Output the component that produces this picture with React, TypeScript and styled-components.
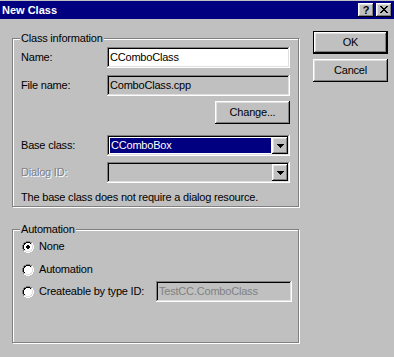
import React from 'react';
import styled, { createGlobalStyle } from 'styled-components';

const Global = createGlobalStyle`
  html, body { margin: 0; padding: 0; background: #c0c0c0; }
  body { font-family: "Liberation Sans", Arial, sans-serif; font-size: 11px; }
  * { box-sizing: border-box; }
`;

const raised = `box-shadow: inset -1px -1px #000, inset 1px 1px #fff, inset -2px -2px #808080, inset 2px 2px #dfdfdf;`;
const sunken = `box-shadow: inset -1px -1px #fff, inset 1px 1px #808080, inset -2px -2px #dfdfdf, inset 2px 2px #000;`;

const Window = styled.div`
  width: 394px;
  height: 357px;
  background: #c0c0c0;
  display: flex;
  flex-direction: column;
  overflow: hidden;
  color: #000;
  font-family: "Liberation Sans", Arial, sans-serif;
  font-size: 11px;
  line-height: 13px;
  letter-spacing: -0.2px;
`;

const TitleBar = styled.div`
  margin-top: 1px;
  height: 18px;
  background: #000080;
  display: flex;
  align-items: center;
  justify-content: space-between;
  padding: 0 2px 0 2px;
`;

const Title = styled.span`
  color: #fff;
  font-weight: bold;
  letter-spacing: 0;
`;

const CaptionButtons = styled.div`
  display: flex;
  gap: 2px;
`;

const CaptionButton = styled.div`
  width: 16px;
  height: 14px;
  background: #c0c0c0;
  ${raised}
  display: flex;
  align-items: center;
  justify-content: center;
  font-weight: bold;
  font-size: 11px;
  letter-spacing: 0;
  line-height: 14px;
  padding-bottom: 1px;
`;

const Body = styled.div`
  display: flex;
  align-items: flex-start;
  gap: 14px;
  padding: 12px 0 0 12px;
`;

const LeftColumn = styled.div`
  width: 287px;
  margin-top: 7px;
  display: flex;
  flex-direction: column;
  gap: 22px;
`;

const GroupBox = styled.div<{ $height: number; $pad: string }>`
  position: relative;
  height: ${(p) => p.$height}px;
  border: 1px solid #808080;
  box-shadow: inset 1px 1px #fff, 1px 1px #fff;
  padding: ${(p) => p.$pad};
  display: flex;
  flex-direction: column;
`;

const GroupLabel = styled.span`
  position: absolute;
  top: -7px;
  left: 7px;
  padding: 0 1px;
  background: #c0c0c0;
  line-height: 13px;
`;

const FieldRow = styled.div<{ $mt?: number }>`
  display: grid;
  grid-template-columns: 86px 183px;
  align-items: center;
  height: 21px;
  margin-top: ${(p) => p.$mt ?? 0}px;
`;

const Label = styled.span<{ $disabled?: boolean }>`
  color: ${(p) => (p.$disabled ? '#808080' : '#000')};
  text-shadow: ${(p) => (p.$disabled ? '1px 1px #fff' : 'none')};
`;

const TextField = styled.input<{ $disabled?: boolean }>`
  display: block;
  width: ${(p) => (p.width ? `${p.width}px` : '100%')};
  height: 21px;
  margin: 0;
  border: none;
  outline: none;
  padding: 0 3px 1px 3px;
  font: inherit;
  letter-spacing: -0.2px;
  color: ${(p) => (p.$disabled ? '#808080' : '#000')};
  background: ${(p) => (p.readOnly ? '#c0c0c0' : '#fff')};
  ${sunken}
`;

const ButtonRow = styled.div<{ $mt?: number }>`
  display: flex;
  justify-content: flex-end;
  padding-right: 0;
  width: 269px;
  margin-top: ${(p) => p.$mt ?? 0}px;
`;

const PushButton = styled.button<{ $default?: boolean }>`
  width: 75px;
  height: 23px;
  margin: 0;
  padding: 0 0 1px 0;
  border: none;
  background: #c0c0c0;
  font: inherit;
  letter-spacing: -0.2px;
  color: #000;
  ${(p) =>
    p.$default
      ? `box-shadow: inset 0 0 0 1px #000, inset -2px -2px #000, inset 2px 2px #fff, inset -3px -3px #808080, inset 3px 3px #dfdfdf;`
      : raised}
`;

const ComboBox = styled.div<{ $disabled?: boolean }>`
  display: flex;
  align-items: stretch;
  height: 21px;
  padding: 2px;
  background: ${(p) => (p.$disabled ? '#c0c0c0' : '#fff')};
  ${sunken}
`;

const ComboValue = styled.div<{ $selected?: boolean }>`
  flex: 1;
  margin: 1px;
  padding: 0 0 0 1px;
  display: flex;
  align-items: center;
  background: ${(p) => (p.$selected ? '#000080' : 'transparent')};
  color: ${(p) => (p.$selected ? '#fff' : '#000')};
`;

const DropButton = styled.div`
  width: 16px;
  background: #c0c0c0;
  ${raised}
  display: flex;
  align-items: center;
  justify-content: center;
`;

const Note = styled.div<{ $mt?: number }>`
  margin-top: ${(p) => p.$mt ?? 0}px;
  line-height: 13px;
`;

const ButtonColumn = styled.div`
  display: flex;
  flex-direction: column;
  gap: 5px;
`;

const OptionRow = styled.div<{ $mt?: number; $h?: number }>`
  display: flex;
  align-items: center;
  height: ${(p) => p.$h ?? 13}px;
  margin-top: ${(p) => p.$mt ?? 0}px;
`;

const Option = styled.label<{ $width?: number }>`
  display: flex;
  align-items: center;
  gap: 5px;
  width: ${(p) => (p.$width ? `${p.$width}px` : 'auto')};
`;

const RING = [
  '....oooo....',
  '..ooiiiioo..',
  '.oiiwwwwiio.',
  '.oiwwwwwwio.',
  'oiwwwwwwwwio',
  'oiwwwwwwwwio',
  'oiwwwwwwwwio',
  'oiwwwwwwwwio',
  '.oiwwwwwwio.',
  '.oiiwwwwiio.',
  '..ooiiiioo..',
  '....oooo....',
];
const DOT = ['.KK.', 'KKKK', 'KKKK', '.KK.'];

function Radio({ checked }: { checked?: boolean }) {
  const rects: React.ReactNode[] = [];
  RING.forEach((row, y) => {
    row.split('').forEach((c, x) => {
      if (c === '.') return;
      const dark = x + y <= 10;
      let fill = '#fff';
      if (c === 'o') fill = dark ? '#808080' : '#fff';
      if (c === 'i') fill = dark ? '#000' : '#dfdfdf';
      rects.push(<rect key={`${x}-${y}`} x={x} y={y} width={1} height={1} fill={fill} />);
    });
  });
  if (checked) {
    DOT.forEach((row, y) =>
      row.split('').forEach((c, x) => {
        if (c === 'K') rects.push(<rect key={`d${x}-${y}`} x={x + 4} y={y + 4} width={1} height={1} fill="#000" />);
      })
    );
  }
  return (
    <svg width="12" height="12" viewBox="0 0 12 12" shapeRendering="crispEdges" style={{ flex: 'none' }}>
      {rects}
    </svg>
  );
}

const CLOSE = ['KK....KK', '.KK..KK.', '..KKKK..', '...KK...', '..KKKK..', '.KK..KK.', 'KK....KK'];

function CloseGlyph() {
  const rects: React.ReactNode[] = [];
  CLOSE.forEach((row, y) =>
    row.split('').forEach((c, x) => {
      if (c === 'K') rects.push(<rect key={`${x}-${y}`} x={x} y={y} width={1} height={1} fill="#000" />);
    })
  );
  return (
    <svg width="8" height="7" viewBox="0 0 8 7" shapeRendering="crispEdges">
      {rects}
    </svg>
  );
}

function Arrow() {
  return (
    <svg width="7" height="4" viewBox="0 0 7 4" shapeRendering="crispEdges">
      <rect x="0" y="0" width="7" height="1" fill="#000" />
      <rect x="1" y="1" width="5" height="1" fill="#000" />
      <rect x="2" y="2" width="3" height="1" fill="#000" />
      <rect x="3" y="3" width="1" height="1" fill="#000" />
    </svg>
  );
}

export default function App() {
  return (
    <>
      <Global />
      <Window>
        <TitleBar>
          <Title>New Class</Title>
          <CaptionButtons>
            <CaptionButton>?</CaptionButton>
            <CaptionButton>
              <CloseGlyph />
            </CaptionButton>
          </CaptionButtons>
        </TitleBar>
        <Body>
          <LeftColumn>
            <GroupBox $height={169} $pad="8px 0 0 8px">
              <GroupLabel>Class information</GroupLabel>
              <FieldRow>
                <Label>Name:</Label>
                <TextField defaultValue="CComboClass" />
              </FieldRow>
              <FieldRow $mt={7}>
                <Label>File name:</Label>
                <TextField readOnly defaultValue="ComboClass.cpp" />
              </FieldRow>
              <ButtonRow $mt={5}>
                <PushButton>Change...</PushButton>
              </ButtonRow>
              <FieldRow $mt={11}>
                <Label>Base class:</Label>
                <ComboBox>
                  <ComboValue $selected>CComboBox</ComboValue>
                  <DropButton>
                    <Arrow />
                  </DropButton>
                </ComboBox>
              </FieldRow>
              <FieldRow $mt={6}>
                <Label $disabled>Dialog ID:</Label>
                <ComboBox $disabled>
                  <ComboValue />
                  <DropButton>
                    <Arrow />
                  </DropButton>
                </ComboBox>
              </FieldRow>
              <Note $mt={8}>The base class does not require a dialog resource.</Note>
            </GroupBox>
            <GroupBox $height={114} $pad="10px 0 0 9px">
              <GroupLabel>Automation</GroupLabel>
              <OptionRow>
                <Option>
                  <Radio checked />
                  None
                </Option>
              </OptionRow>
              <OptionRow $mt={10}>
                <Option>
                  <Radio />
                  Automation
                </Option>
              </OptionRow>
              <OptionRow $mt={5} $h={21}>
                <Option $width={134}>
                  <Radio />
                  Createable by type ID:
                </Option>
                <TextField readOnly $disabled width={136} defaultValue="TestCC.ComboClass" />
              </OptionRow>
            </GroupBox>
          </LeftColumn>
          <ButtonColumn>
            <PushButton $default>OK</PushButton>
            <PushButton>Cancel</PushButton>
          </ButtonColumn>
        </Body>
      </Window>
    </>
  );
}
